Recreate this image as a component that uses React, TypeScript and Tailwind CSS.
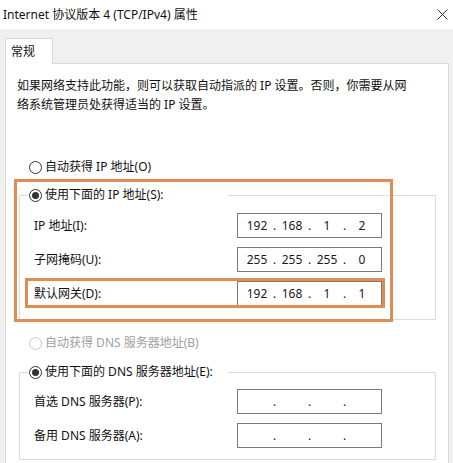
import React from "react";

const Radio = ({ checked = false, disabled = false }: { checked?: boolean; disabled?: boolean }) => (
  <span
    className={`flex h-[13px] w-[13px] shrink-0 items-center justify-center rounded-full border bg-white ${
      disabled ? "border-[#c8c8c8]" : "border-[#333333]"
    }`}
  >
    {checked && <span className="h-[7px] w-[7px] rounded-full bg-[#333333]" />}
  </span>
);

const IpBox = ({ parts }: { parts: string[] }) => (
  <div className="flex h-[25px] w-[145px] items-center border border-[#7a7a7a] bg-white pl-[5px] text-[12px] leading-none text-[#1a1a1a]">
    {parts.map((p, i) => (
      <React.Fragment key={i}>
        {i > 0 && <span className="w-[7px] text-center">.</span>}
        <span className="w-[28px] text-center">{p}</span>
      </React.Fragment>
    ))}
  </div>
);

const Row = ({ label, parts, first }: { label: string; parts: string[]; first?: boolean }) => (
  <div className={`flex items-center ${first ? "mt-[8px]" : "mt-[9px]"}`}>
    <span className="w-[203px]">{label}</span>
    <IpBox parts={parts} />
  </div>
);

const Group = ({ legend, children, pad }: { legend: string; children: React.ReactNode; pad: string }) => (
  <fieldset className={`ml-[13px] mr-[12px] border border-[#dcdcdc] ${pad}`}>
    <legend className="ml-[8px] w-[200px] pl-[1px]">
      <div className="flex h-[20px] items-center gap-[3px]">
        <Radio checked />
        <span>{legend}</span>
      </div>
    </legend>
    <div className="pl-[14px]">{children}</div>
  </fieldset>
);

export default function App() {
  const empty = ["", "", "", ""];
  return (
    <div className="relative h-[463px] w-[453px] overflow-hidden bg-[#f0f0f0] font-['Noto_Sans','Noto_Sans_CJK_SC',sans-serif] text-[12px] text-[#111111]">
      <div className="flex h-[29px] items-center justify-between bg-white pl-[3px] pr-[5px]">
        <span>Internet 协议版本 4 (TCP/IPv4) 属性</span>
        <svg width="11" height="11" viewBox="0 0 11 11" className="mb-[1px]">
          <path d="M0.5 0.5 L10.5 10.5 M10.5 0.5 L0.5 10.5" stroke="#333" strokeWidth="1" />
        </svg>
      </div>

      <div className="px-[5px] pt-[9px]">
        <div className="relative z-10 -mb-px flex h-[26px] w-[48px] items-center border border-b-0 border-[#d9d9d9] bg-white pl-[5px]">
          常规
        </div>
      </div>

      <div className="ml-[5px] mr-[4px] h-[420px] border border-[#d9d9d9] bg-white">
        <p className="mt-[12px] pl-[11px] leading-[19px]">
          如果网络支持此功能，则可以获取自动指派的 IP 设置。否则，你需要从网
          <br />
          络系统管理员处获得适当的 IP 设置。
        </p>

        <div className="ml-[23px] mt-[43px] flex h-[20px] items-center gap-[3px]">
          <Radio />
          <span>自动获得 IP 地址(O)</span>
        </div>

        <div className="mt-[8px]">
          <Group legend="使用下面的 IP 地址(S):" pad="pb-[13px]">
            <Row first label="IP 地址(I):" parts={["192", "168", "1", "2"]} />
            <Row label="子网掩码(U):" parts={["255", "255", "255", "0"]} />
            <Row label="默认网关(D):" parts={["192", "168", "1", "1"]} />
          </Group>
        </div>

        <div className="ml-[23px] mt-[13px] flex h-[20px] items-center gap-[3px] text-[#a0a0a0]">
          <Radio disabled />
          <span>自动获得 DNS 服务器地址(B)</span>
        </div>

        <div className="mt-[9px]">
          <Group legend="使用下面的 DNS 服务器地址(E):" pad="pb-[11px]">
            <div className="mt-[7px] flex items-center">
              <span className="w-[203px]">首选 DNS 服务器(P):</span>
              <IpBox parts={empty} />
            </div>
            <div className="mt-[9px] flex items-center">
              <span className="w-[203px]">备用 DNS 服务器(A):</span>
              <IpBox parts={empty} />
            </div>
          </Group>
        </div>
      </div>

      {/* annotation boxes */}
      <div className="absolute left-[14px] top-[179px] h-[143px] w-[379px] border-[3px] border-[#e08c55]" />
      <div className="absolute left-[25px] top-[278px] h-[30px] w-[360px] border-[3px] border-[#e08c55]" />
    </div>
  );
}
